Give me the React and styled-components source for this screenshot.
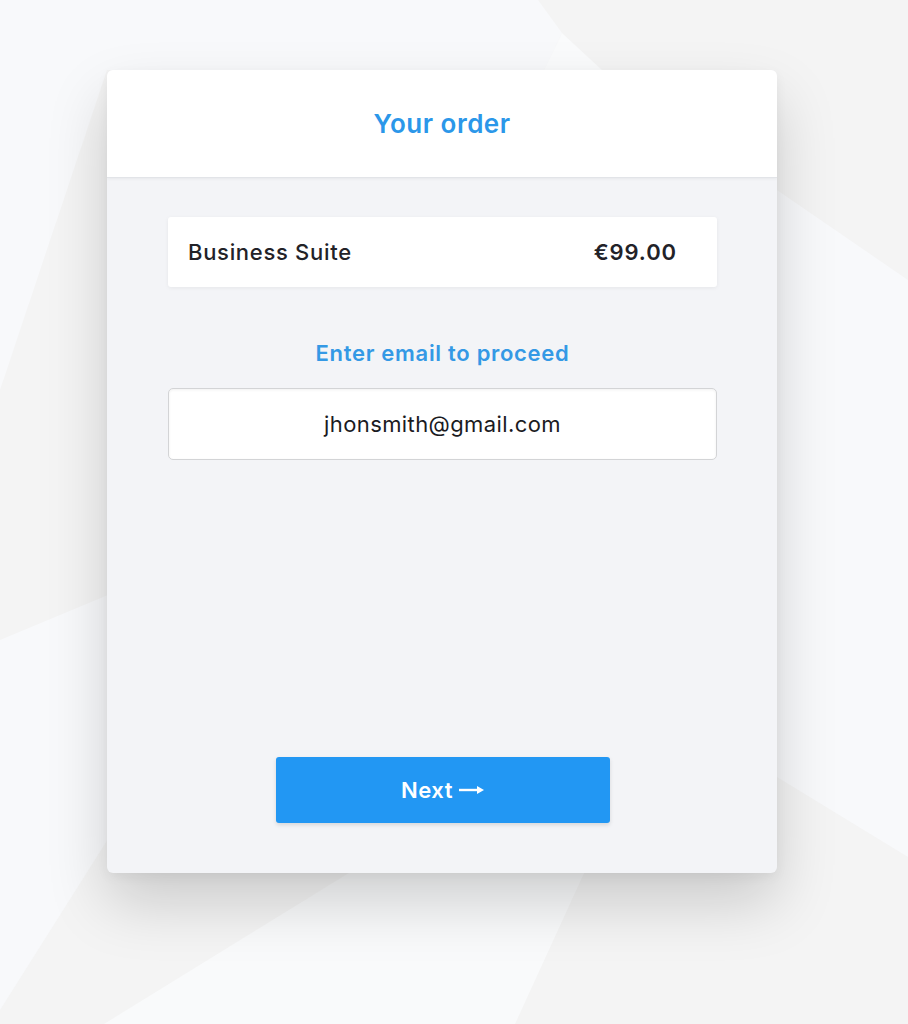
import React from 'react';
import styled, { createGlobalStyle } from 'styled-components';

const GlobalStyle = createGlobalStyle`
  html, body {
    margin: 0;
    padding: 0;
    background: #f4f4f4;
    font-family: Inter, "Noto Sans", sans-serif;
  }
`;

const Page = styled.div`
  position: relative;
  width: 908px;
  height: 1024px;
  overflow: hidden;
  background: #f4f4f4;
`;

const Backdrop = styled.svg`
  position: absolute;
  inset: 0;
  width: 908px;
  height: 1024px;
`;

const Card = styled.div`
  position: relative;
  margin: 70px 0 0 107px;
  width: 670px;
  border-radius: 6px;
  background: #f3f4f7;
  box-shadow: 0 30px 60px rgba(0, 0, 0, 0.17), 0 4px 12px rgba(0, 0, 0, 0.05);
  overflow: hidden;
`;

const Header = styled.div`
  height: 107px;
  display: flex;
  align-items: center;
  justify-content: center;
  background: #ffffff;
  border-bottom: 1px solid #e2e4e8;
  box-shadow: 0 1px 3px rgba(0, 0, 0, 0.05);
`;

const Title = styled.h1`
  margin: 0;
  font-size: 26px;
  font-weight: 600;
  color: #2b97e9;
  letter-spacing: 0.5px;
`;

const Body = styled.div`
  height: 695px;
  padding: 39px 60px 0 61px;
  box-sizing: border-box;
  display: flex;
  flex-direction: column;
  align-items: center;
`;

const ItemRow = styled.div`
  align-self: stretch;
  height: 70px;
  display: flex;
  align-items: center;
  justify-content: space-between;
  padding: 0 40px 0 20px;
  background: #ffffff;
  border-radius: 3px;
  box-shadow: 0 1px 4px rgba(0, 0, 0, 0.06);
`;

const ItemText = styled.span`
  font-size: 22px;
  font-weight: ${(p) => (p.$strong ? 600 : 500)};
  letter-spacing: ${(p) => (p.$strong ? '0.9px' : '0.7px')};
  color: #222228;
`;

const Label = styled.div`
  margin-top: 53px;
  font-size: 22px;
  font-weight: 600;
  letter-spacing: 0.7px;
  color: #3499e5;
`;

const EmailInput = styled.input`
  margin-top: 22px;
  align-self: stretch;
  height: 72px;
  box-sizing: border-box;
  border: 1px solid #d3d4d6;
  border-radius: 5px;
  background: #ffffff;
  box-shadow: inset 0 1px 3px rgba(0, 0, 0, 0.06);
  text-align: center;
  font-family: Inter, "Noto Sans", sans-serif;
  font-size: 22px;
  letter-spacing: 0.4px;
  color: #1b1b1f;
  outline: none;
`;

const NextButton = styled.button`
  margin-top: auto;
  margin-bottom: 50px;
  width: 334px;
  height: 66px;
  border: none;
  border-radius: 3px;
  background: #2297f3;
  box-shadow: 0 2px 4px rgba(0, 0, 0, 0.12);
  color: #ffffff;
  font-family: Inter, "Noto Sans", sans-serif;
  font-size: 22px;
  font-weight: 600;
  letter-spacing: 0.5px;
  display: flex;
  align-items: center;
  justify-content: center;
  gap: 6px;
  cursor: pointer;
`;

const Arrow = () => (
  <svg width="25" height="10" viewBox="0 0 25 10">
    <path d="M0 5h19" stroke="#fff" strokeWidth="2.4" />
    <path d="M18 1l7 4-7 4z" fill="#fff" />
  </svg>
);

export default function App() {
  return (
    <>
      <GlobalStyle />
      <Page>
        <Backdrop viewBox="0 0 908 1024">
          <polygon points="0,0 538,0 562,33 544,70 107,70 0,390" fill="#f8f9fb" />
          <polygon points="562,33 602,70 544,70" fill="#fafbfc" />
          <polygon points="777,190 908,280 908,857 777,777" fill="#f8f9fb" />
          <polygon points="0,640 120,590 120,820 0,1010" fill="#f8f9fb" />
          <polygon points="104,1024 370,860 590,860 515,1024" fill="#f9fafb" />
        </Backdrop>
        <Card>
          <Header>
            <Title>Your order</Title>
          </Header>
          <Body>
            <ItemRow>
              <ItemText>Business Suite</ItemText>
              <ItemText $strong>€99.00</ItemText>
            </ItemRow>
            <Label>Enter email to proceed</Label>
            <EmailInput type="email" defaultValue="jhonsmith@gmail.com" />
            <NextButton>
              Next <Arrow />
            </NextButton>
          </Body>
        </Card>
      </Page>
    </>
  );
}
